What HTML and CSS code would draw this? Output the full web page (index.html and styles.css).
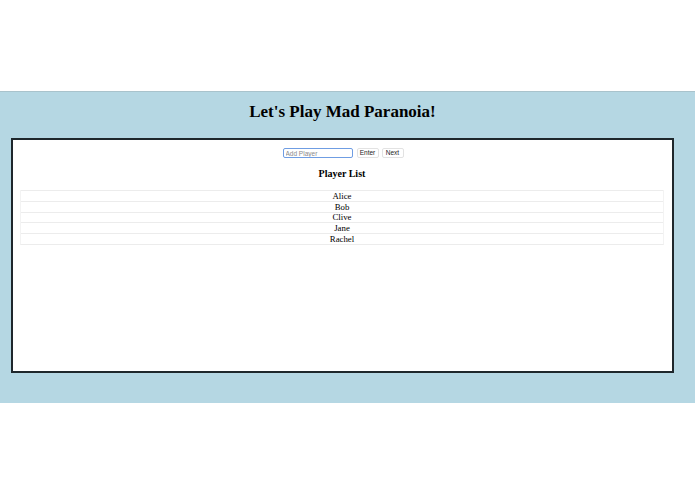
FILE: index.html
```html
<!DOCTYPE html>
<html>
<head>
<meta charset="utf-8">
<title>Mad Paranoia</title>
<link rel="stylesheet" href="styles.css">
</head>
<body>
<div class="page">
  <section class="stage">
    <h1 class="title">Let's Play Mad Paranoia!</h1>
    <div class="board">
      <div class="controls">
        <input class="player-input" type="text" placeholder="Add Player">
        <button class="btn">Enter</button>
        <button class="btn">Next</button>
      </div>
      <h3 class="list-title">Player List</h3>
      <div class="players">
        <div class="player">Alice</div>
        <div class="player">Bob</div>
        <div class="player">Clive</div>
        <div class="player">Jane</div>
        <div class="player">Rachel</div>
      </div>
    </div>
  </section>
</div>
</body>
</html>
```

FILE: styles.css
```css
html, body {
  margin: 0;
  padding: 0;
  background: #ffffff;
}
body {
  font-family: "Liberation Serif", "Times New Roman", serif;
  color: #000;
}
.page {
  padding-top: 91px;
}
.stage {
  background: #b5d7e3;
  height: 312px;
  box-sizing: border-box;
  padding: 0 21px 0 11px;
  border-top: 1px solid #a9c3cc;
}
.title {
  margin: 0;
  padding: 9px 0 15px;
  font-size: 17px;
  line-height: 22px;
  font-weight: bold;
  text-align: center;
}
.board {
  background: #fff;
  border: 2px solid #1e272c;
  height: 235px;
  box-sizing: border-box;
  padding: 8px 8px 0 7px;
}
.controls {
  display: flex;
  justify-content: center;
  align-items: center;
  gap: 3px;
  height: 10px;
  padding-left: 2px;
}
.player-input {
  box-sizing: border-box;
  width: 70px;
  height: 10px;
  margin: 0 1px 0 0;
  padding: 0 2px;
  border: 1.5px solid #6f9de3;
  border-radius: 2px;
  font-family: "Liberation Sans", Arial, sans-serif;
  font-size: 6.5px;
  outline: none;
  background: #fff;
}
.player-input::placeholder {
  color: #8a8a8a;
}
.btn {
  box-sizing: border-box;
  height: 10px;
  width: 22px;
  padding: 0;
  margin: 0;
  border: 1px solid #e2e2e2;
  border-radius: 2px;
  background: #fff;
  font-family: "Liberation Sans", Arial, sans-serif;
  font-size: 6.5px;
  color: #222;
  line-height: 8px;
}
.list-title {
  margin: 0;
  padding: 10px 0 10px;
  font-size: 10px;
  line-height: 12px;
  text-align: center;
}
.players {
  border-bottom: 1px solid #ececec;
  border-left: 1px solid #f3f3f3;
  border-right: 1px solid #f3f3f3;
}
.player {
  height: 10.8px;
  box-sizing: border-box;
  border-top: 1px solid #ececec;
  padding-top: 0.8px;
  font-size: 8.8px;
  line-height: 9px;
  text-align: center;
  color: #000;
}
```
